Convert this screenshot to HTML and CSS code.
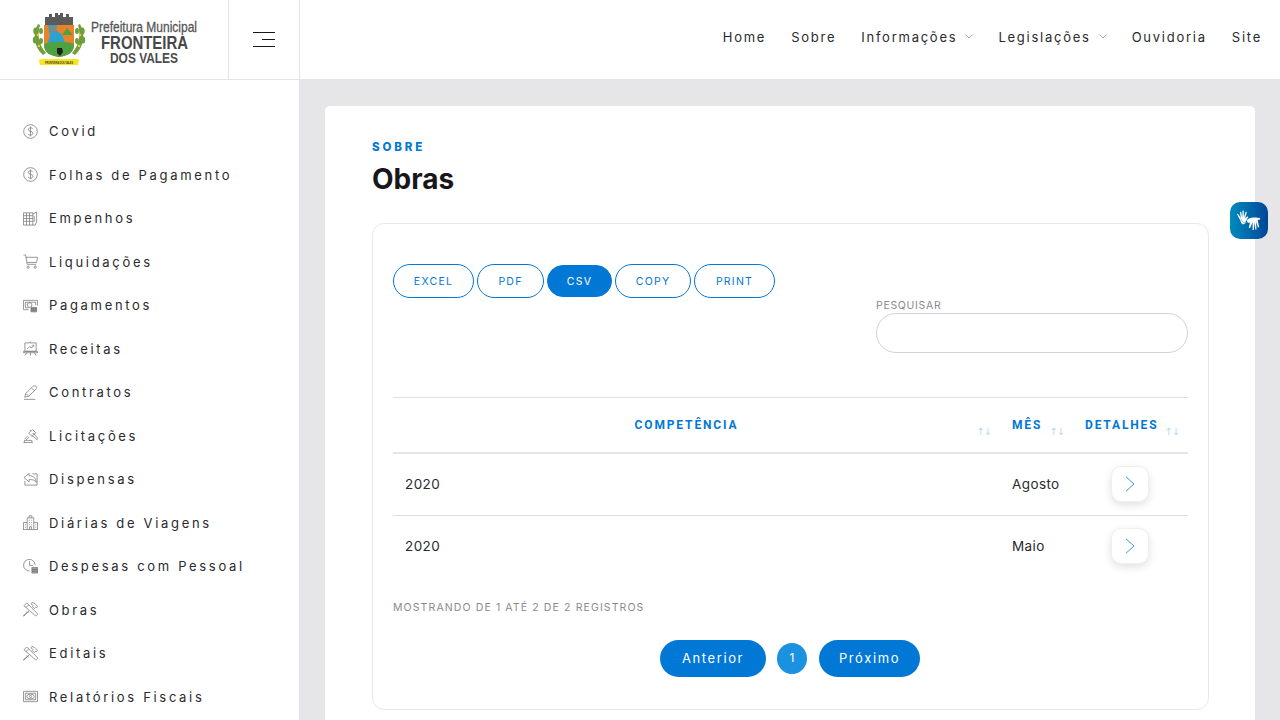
FILE: index.html
```html
<!DOCTYPE html>
<html lang="pt-BR">
<head>
<meta charset="utf-8">
<title>Obras</title>
<link rel="stylesheet" href="styles.css">
</head>
<body>
<svg class="defs" width="0" height="0" aria-hidden="true">
  <symbol id="i-dollar" viewBox="0 0 16 16"><circle cx="8" cy="8" r="7.300"/><path d="M10.400 5.300C9.800 4.300 8.800 4 8 4 6.600 4 5.600 4.800 5.600 5.900c0 2.500 4.900 1.300 4.900 4 0 1.200-1.100 2-2.500 2-1.100 0-2.100-.4-2.600-1.400M8 2.800v10.400"/></symbol>
  <symbol id="i-ledger" viewBox="0 0 16 16"><path d="M.5 2h10v13H.5zM.5 5h10M.5 8h10M.5 11h10M3.700 2v13M7 2v13M10.500 3.500l4-2.500v10.500L13 15h-2.500M12 5.500v6"/></symbol>
  <symbol id="i-cart" viewBox="0 0 16 16"><path d="M.5 1h2.200l1.800 10h9.500M3.200 3.500h12.300l-1 5.500H4.200"/><circle cx="5.500" cy="14" r="1.200"/><circle cx="13" cy="14" r="1.200"/></symbol>
  <symbol id="i-pay" viewBox="0 0 16 16"><path d="M6 12.500H.5v-10h15V8M2.500 4.500h11v3M2.500 4.500v6H6"/><circle cx="7" cy="7.500" r="2.500"/><path class="fill-soft" d="M8.500 10h6v1.500h-6zM8.500 11.500h6V13h-6zM8.500 13h6v1.800h-6z"/></symbol>
  <symbol id="i-easel" viewBox="0 0 16 16"><path d="M2 2h12v9H2zM.5 11h15v1.500H.5zM8 .5V2M4 12.500 2 15.500M12 12.500l2 3M8 12.500v3M4.500 8.500 7 6l2 1.500 2.500-3M10 4.500h1.500V6"/></symbol>
  <symbol id="i-pen" viewBox="0 0 16 16"><path d="M1 15.300h12M1.800 13 3 9 10.500 1.500c.8-.8 2.500-.8 3.300 0s.8 2.200 0 3L6 12zM3 9l3 3M9 3l3.500 3.500"/></symbol>
  <symbol id="i-gavel" viewBox="0 0 16 16"><path d="M6 5.500 10 1.500l3.500 3.500-4 4zM8.500 3.500 7 2M12 7l-1.500-1.500M9 7.500l6 5 .8-1.300L11 5.500M.5 15.500h10M1.500 15.500V13.200h8v2.300M3 13l3.500-3.500M1.500 12 5 8.500"/></symbol>
  <symbol id="i-return" viewBox="0 0 16 16"><path d="M6.500 1.500 1 6l5.500 4.500V8c3.500 0 6 .5 7.500 3 0-4.500-3-7-7.500-7zM10 2h5v12H2V9.500"/></symbol>
  <symbol id="i-office" viewBox="0 0 16 16"><path d="M4.500 15.500V3h7v12.500M6.500 3V.8h3V3M.5 15.500V8h4M15.500 15.500V8h-4M0 15.500h16M6.300 5.500h1M8.700 5.500h1M6.300 8h1M8.700 8h1M6.300 10.500h1M8.700 10.500h1M7 15.500v-3h2v3M2 10.500h1M2 13h1M13 10.500h1M13 13h1"/></symbol>
  <symbol id="i-clock" viewBox="0 0 16 16"><path d="M7 12.800A6.200 6.200 0 1 1 13 6.500M7 2.500V7h3.500"/><path class="fill-soft" d="M9.500 9h6v2h-6zM9.500 11h6v2h-6zM9.500 13h6v2h-6z"/></symbol>
  <symbol id="i-tools" viewBox="0 0 16 16"><path d="M1 4 4 1l11 11c.6.8.6 1.500 0 2.200-.7.7-1.500.7-2.200 0zM3 6l3-3M8.500 2l1-1.500 3 1 3 3-1 1.500-1-.5-1.500 1.500-2-2 1-1zM6.500 9.500 2.500 13.500 1 15h-.5v-.5L4.500 11M4 10l2 2"/></symbol>
  <symbol id="i-note" viewBox="0 0 16 16"><path d="M.5 2.500h15v11H.5zM2.500 4.500h11v7h-11z"/><ellipse cx="8" cy="8" rx="4" ry="2.500"/><circle cx="8" cy="8" r="1.200"/></symbol>
</svg>

<header class="topbar">
  <a class="brand" href="#">
    <svg class="crest" viewBox="0 0 170 56" width="170" height="56" role="img" aria-label="Prefeitura Municipal Fronteira dos Vales">
      <g fill="#6f9e3c">
        <path d="M5 13c-5 9-5 22 5 31l3-2C6 34 4 24 7 14z"/>
        <path d="M47 13c5 9 5 22-5 31l-3-2c7-8 9-18 6-28z"/>
        <ellipse cx="2.500" cy="20" rx="2.200" ry="3.500"/><ellipse cx="8" cy="20" rx="2" ry="3"/>
        <ellipse cx="2" cy="29" rx="2.200" ry="3.500"/><ellipse cx="8" cy="30" rx="2" ry="3"/>
        <ellipse cx="49.500" cy="20" rx="2.200" ry="3.500"/><ellipse cx="44" cy="20" rx="2" ry="3"/>
        <ellipse cx="50" cy="29" rx="2.200" ry="3.500"/><ellipse cx="44" cy="30" rx="2" ry="3"/>
      </g>
      <g fill="#e0cf3c">
        <circle cx="5" cy="24" r="1.300"/><circle cx="6" cy="35" r="1.300"/><circle cx="47" cy="24" r="1.300"/><circle cx="46" cy="35" r="1.300"/>
      </g>
      <path d="M12 6h4V3h3v3h3V2h3v2h2V2h3v4h3V3h3v3h4v8H12z" fill="#5b5b5b"/>
      <path d="M11 14h30v20c0 8-7 11-15 12-8-1-15-4-15-12z" fill="#e9822d"/>
      <path d="M15 14h9l-1 5 6 5 4 10H14l3-9z" fill="#2aa3d0"/>
      <path d="M34 17l6 7H29z" fill="#4ea03c"/>
      <path d="M11 33c7-3 23-3 30 0v1c0 8-7 11-15 12-8-1-15-4-15-12z" fill="#4fa241"/>
      <circle cx="20" cy="18" r="3.500" fill="#7d8b8b"/>
      <path d="M24 37h5l1 4-3 4-3-3z" fill="#1f1f1f"/>
      <path d="M8 48h36l2 1-1 5H7l-1-5z" fill="#f5e71c"/>
      <text class="c-rib" x="12" y="52.500" textLength="28" lengthAdjust="spacingAndGlyphs">FRONTEIRA DOS VALES</text>
      <text class="c-line1" x="58" y="21" textLength="106" lengthAdjust="spacingAndGlyphs">Prefeitura Municipal</text>
      <text class="c-line2" x="68" y="38" textLength="87" lengthAdjust="spacingAndGlyphs">FRONTEIRA</text>
      <text class="c-line3" x="77" y="52" textLength="68" lengthAdjust="spacingAndGlyphs">DOS VALES</text>
    </svg>
  </a>
  <button class="toggle" aria-label="Menu"><span class="bar"></span><span class="bar short"></span><span class="bar"></span></button>
  <nav class="topnav">
    <a href="#">Home</a>
    <a href="#">Sobre</a>
    <a href="#">Informações<svg class="chev" viewBox="0 0 8 5"><path d="M.5.500 4 4 7.500.500"/></svg></a>
    <a href="#">Legislações<svg class="chev" viewBox="0 0 8 5"><path d="M.5.500 4 4 7.500.500"/></svg></a>
    <a href="#">Ouvidoria</a>
    <a href="#">Site</a>
  </nav>
</header>

<div class="layout">
  <aside class="sidebar">
    <a class="side-item" href="#"><svg class="ico"><use href="#i-dollar"/></svg>Covid</a>
    <a class="side-item" href="#"><svg class="ico"><use href="#i-dollar"/></svg>Folhas de Pagamento</a>
    <a class="side-item" href="#"><svg class="ico"><use href="#i-ledger"/></svg>Empenhos</a>
    <a class="side-item" href="#"><svg class="ico"><use href="#i-cart"/></svg>Liquidações</a>
    <a class="side-item" href="#"><svg class="ico"><use href="#i-pay"/></svg>Pagamentos</a>
    <a class="side-item" href="#"><svg class="ico"><use href="#i-easel"/></svg>Receitas</a>
    <a class="side-item" href="#"><svg class="ico"><use href="#i-pen"/></svg>Contratos</a>
    <a class="side-item" href="#"><svg class="ico"><use href="#i-gavel"/></svg>Licitações</a>
    <a class="side-item" href="#"><svg class="ico"><use href="#i-return"/></svg>Dispensas</a>
    <a class="side-item" href="#"><svg class="ico"><use href="#i-office"/></svg>Diárias de Viagens</a>
    <a class="side-item" href="#"><svg class="ico"><use href="#i-clock"/></svg>Despesas com Pessoal</a>
    <a class="side-item" href="#"><svg class="ico"><use href="#i-tools"/></svg>Obras</a>
    <a class="side-item" href="#"><svg class="ico"><use href="#i-tools"/></svg>Editais</a>
    <a class="side-item" href="#"><svg class="ico"><use href="#i-note"/></svg>Relatórios Fiscais</a>
  </aside>

  <main class="content">
    <section class="card">
      <div class="eyebrow">SOBRE</div>
      <h1 class="title">Obras</h1>
      <div class="panel">
        <div class="tools">
          <div class="btns">
            <button class="btn">EXCEL</button>
            <button class="btn">PDF</button>
            <button class="btn active">CSV</button>
            <button class="btn">COPY</button>
            <button class="btn">PRINT</button>
          </div>
          <label class="search">
            <span class="search-label">PESQUISAR</span>
            <input class="search-input" type="text">
          </label>
        </div>
        <table class="grid">
          <colgroup><col class="c1"><col class="c2"><col class="c3"></colgroup>
          <thead>
            <tr>
              <th class="center">COMPETÊNCIA<span class="sort"><i>↑</i><b>↓</b></span></th>
              <th>MÊS<span class="sort"><i>↑</i><b>↓</b></span></th>
              <th>DETALHES<span class="sort"><i>↑</i><b>↓</b></span></th>
            </tr>
          </thead>
          <tbody>
            <tr><td>2020</td><td>Agosto</td><td><a class="go" href="#" aria-label="Detalhes"><svg viewBox="0 0 10 16"><path d="M1 .8 9 8l-8 7.200"/></svg></a></td></tr>
            <tr><td>2020</td><td>Maio</td><td><a class="go" href="#" aria-label="Detalhes"><svg viewBox="0 0 10 16"><path d="M1 .8 9 8l-8 7.200"/></svg></a></td></tr>
          </tbody>
        </table>
        <div class="info">MOSTRANDO DE 1 ATÉ 2 DE 2 REGISTROS</div>
        <div class="pager">
          <a class="pg" href="#">Anterior</a>
          <a class="pg-num" href="#">1</a>
          <a class="pg" href="#">Próximo</a>
        </div>
      </div>
    </section>
  </main>
</div>

<a class="a11y" href="#" aria-label="Acessibilidade em Libras">
  <svg viewBox="0 0 28 26" width="27" height="25">
    <g fill="#fff">
      <path d="M4.500 13 1 6.500l1-.6 3 4.500L4 4l1.300-.2 1.200 6L6.800 2.500 8 2.500l.2 7.300 1.800-6 1.200.4-1.700 6.800 2.500-2.500.8.800L10 14c-.8 2-1 3-3 3-1 0-1.800-2-2.500-4z"/>
      <path d="M11 13c2-2.500 5-3.500 9-3l5 .5v1.500l-2.500.5 1.500 7.500-1.200.3-2-6 .5 8-1.300.1-1-7.500-.5 8h-1.300v-8L14.500 21l-1.200-.4 1.200-5.600C13 16 12 15 11 13z"/>
    </g>
    <path d="M5 11c1 3 3 5 6 4" stroke="#8cc4e0" fill="none"/>
  </svg>
</a>
</body>
</html>
```
FILE: styles.css
```css
* { box-sizing: border-box; }
html, body { margin: 0; height: 720px; overflow: hidden; }
body { font-family: Inter, "Open Sans", sans-serif; color: #17171c; background: #e6e6e8; }
a { color: inherit; text-decoration: none; }
.defs { position: absolute; }

.topbar { display: flex; height: 80px; background: #fff; border-bottom: 1px solid #e4e4e6; }
.brand { width: 229px; flex: none; border-right: 1px solid #e4e4e6; padding: 11px 0 0 33px; }
.crest { display: block; overflow: visible; }
.c-rib { font: 700 3.500px "Liberation Sans", sans-serif; fill: #333; }
.c-line1 { font: 400 15px "Liberation Sans", sans-serif; fill: #555; stroke: #555; stroke-width: .3; }
.c-line2 { font: 700 19px "Liberation Sans", sans-serif; fill: #484848; }
.c-line3 { font: 700 15.500px "Liberation Sans", sans-serif; fill: #4c4c4c; }
.toggle { width: 71px; flex: none; background: #fff; border: 0; border-right: 1px solid #e4e4e6; padding: 0 24px; display: flex; flex-direction: column; align-items: flex-end; justify-content: center; gap: 5.500px; }
.bar { display: block; width: 22px; height: 1.500px; background: #17171c; }
.bar.short { width: 13px; }
.topnav { margin-left: auto; display: flex; align-items: center; padding: 0 18px 6px 0; gap: 25px; font-size: 13px; letter-spacing: 1.750px; color: #2a2a2e; }
.topnav a { display: flex; align-items: center; }
.chev { width: 8px; height: 5px; margin-left: 8px; fill: none; stroke: #999; stroke-width: .8; }

.layout { display: flex; height: 640px; }
.sidebar { width: 300px; flex: none; background: #fff; border-right: 1px solid #e4e4e6; padding-top: 29.400px; overflow: hidden; }
.side-item { display: flex; align-items: center; height: 43.500px; padding-left: 23px; font-size: 13px; letter-spacing: 2.680px; color: #2a2a2e; }
.ico { width: 15px; height: 15px; margin-right: 11px; flex: none; fill: none; stroke: #777; stroke-width: .8; }
.fill-soft { fill: #aaa; }

.content { flex: 1; padding: 26px 25px 0; }
.card { background: #fff; border-radius: 5px; padding: 34px 46px 0 47px; height: 640px; }
.eyebrow { font: 800 11.500px/14px Inter, sans-serif; letter-spacing: 2.900px; color: #0278d6; }
.title { margin: 8px 0 0; font: 700 28px/34px Inter, sans-serif; color: #17171c; }
.panel { margin-top: 27px; height: 487px; border: 1px solid #e8e8ea; border-radius: 12px; padding: 40px 20px 0; }

.tools { display: flex; justify-content: space-between; height: 133px; }
.btns { display: flex; align-items: flex-start; gap: 3px; }
.btn { height: 34px; padding: 0; border: 1px solid #0278d6; border-radius: 17px; background: #fff; color: #0278d6; font: 400 10.500px Inter, sans-serif; letter-spacing: 1.250px; }
.btn:nth-child(1) { width: 81px; }
.btn:nth-child(2) { width: 67px; }
.btn:nth-child(3) { width: 65px; }
.btn:nth-child(4) { width: 76px; }
.btn:nth-child(5) { width: 81px; }
.btn.active { background: #0278d6; color: #fff; height: 32px; margin-top: 1px; }
.search { display: block; width: 312px; padding-top: 35px; }
.search-label { display: block; font-size: 10.500px; line-height: 14px; letter-spacing: .7px; color: #8a8a8e; }
.search-input { display: block; width: 312px; height: 40px; border: 1px solid #d2d2d8; border-radius: 20px; background: #fff; outline: none; }

.grid { width: 795px; border-collapse: collapse; table-layout: fixed; border-top: 1px solid #dedee0; }
.c1 { width: 607px; }
.c2 { width: 73px; }
.c3 { width: 115px; }
.grid th { position: relative; height: 55px; padding: 0 12px 0; border-bottom: 2px solid #e6e6e8; text-align: left; font: 700 12px Roboto, sans-serif; letter-spacing: 1.850px; color: #0278d6; }
.grid th.center { text-align: center; padding-right: 32px; }
.sort { position: absolute; right: 8px; bottom: 14px; display: flex; font: 400 10px/12px "DejaVu Sans", sans-serif; letter-spacing: 0; color: #b9d9f3; }
.sort i, .sort b { font-style: normal; font-weight: 400; margin-left: -1px; }
.grid td { height: 62px; padding: 0 12px 2px; border-bottom: 1px solid #dedee0; font-size: 13.500px; letter-spacing: .4px; color: #2a2a2e; }
.grid tbody tr:first-child td { height: 63px; padding-bottom: 0; }
.grid tbody tr:last-child td { border-bottom: 0; }
.go { display: flex; align-items: center; justify-content: center; width: 38px; height: 36px; margin-left: 26px; background: #fff; border: 1px solid #f0f0f2; border-radius: 10px; box-shadow: 0 3px 8px rgba(0,0,0,.12); }
.go svg { width: 10px; height: 16px; fill: none; stroke: #3f97e4; stroke-width: 1; }

.info { margin-top: 23px; font-size: 10.500px; line-height: 14px; letter-spacing: 1.120px; color: #8a8a8e; }
.pager { display: flex; justify-content: center; align-items: center; margin-top: 25px; padding-right: 1px; }
.pg { display: flex; align-items: center; justify-content: center; height: 37px; border-radius: 19px; background: #0278d6; color: #fff; font-size: 13px; letter-spacing: 1.600px; width: 106px; }
.pg:last-child { width: 101px; }
.pg-num { display: flex; align-items: center; justify-content: center; width: 30px; height: 31px; margin: 0 12px 0 11px; padding-bottom: 2px; border-radius: 50%; background: #1a92e0; color: #fff; font-size: 12px; }

.a11y { position: absolute; left: 1230px; top: 202px; width: 38px; height: 37px; border-radius: 10px; background: linear-gradient(90deg, #008cbc, #004699); display: flex; align-items: center; justify-content: center; }
```
